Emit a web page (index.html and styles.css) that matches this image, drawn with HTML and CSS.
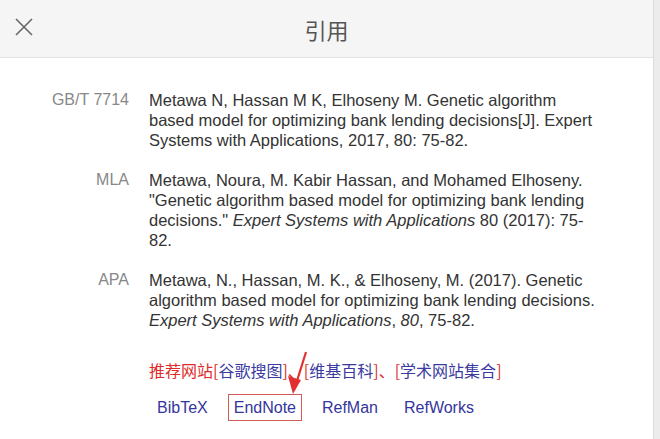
FILE: index.html
```html
<!DOCTYPE html>
<html lang="zh-CN">
<head>
    <meta charset="UTF-8">
    <meta name="viewport" content="width=device-width, initial-scale=1.0">
    <title>引用</title>
    <link rel="stylesheet" href="styles.css">
</head>
<body>
    <!-- Hộp thoại trích dẫn -->
    <div class="dialog">
        <div class="header">
            <span class="close">
                <svg width="20" height="20" viewBox="0 0 20 20">
                    <path d="M2 2 L18 18 M18 2 L2 18" stroke="#666" stroke-width="1.6" fill="none"/>
                </svg>
            </span>
            <span class="title">引用</span>
        </div>

        <div class="content">
            <div class="cite">
                <div class="label">GB/T 7714</div>
                <div class="text">Metawa N, Hassan M K, Elhoseny M. Genetic algorithm based model for optimizing bank lending decisions[J]. Expert Systems with Applications, 2017, 80: 75-82.</div>
            </div>
            <div class="cite">
                <div class="label">MLA</div>
                <div class="text">Metawa, Noura, M. Kabir Hassan, and Mohamed Elhoseny. "Genetic algorithm based model for optimizing bank lending decisions." <i>Expert Systems with Applications</i> 80 (2017): 75-82.</div>
            </div>
            <div class="cite">
                <div class="label">APA</div>
                <div class="text">Metawa, N., Hassan, M. K., &amp; Elhoseny, M. (2017). Genetic algorithm based model for optimizing bank lending decisions. <i>Expert Systems with Applications</i>, <i>80</i>, 75-82.</div>
            </div>

            <div class="sites">
                <span class="red">推荐网站[</span><span class="blue">谷歌搜图</span><span class="red">]、[</span><span class="blue">维基百科</span><span class="red">]、[</span><span class="blue">学术网站集合</span><span class="red">]</span>
            </div>

            <div class="links">
                <a href="#">BibTeX</a>
                <a href="#" class="marked">EndNote</a>
                <a href="#">RefMan</a>
                <a href="#">RefWorks</a>
            </div>
        </div>

        <!-- Mũi tên đánh dấu -->
        <svg class="arrow" width="40" height="50" viewBox="0 0 40 50">
            <path d="M26 2 L16 34" stroke="#e23030" stroke-width="2.2" fill="none"/>
            <polygon points="8,26 21,30 13,44" fill="#e23030"/>
        </svg>
    </div>
</body>
</html>
```

FILE: styles.css
```css
body {
    margin: 0;
    background: #ececec;
    font-family: "Liberation Sans", Arial, "Noto Sans CJK SC", sans-serif;
}

.dialog {
    width: 653px;
    height: 439px;
    background: #fff;
    border-right: 1px solid #dcdcdc;
    position: relative;
    overflow: hidden;
}

.header {
    height: 57px;
    background: #f5f5f5;
    border-bottom: 1px solid #e2e2e2;
    display: flex;
    align-items: center;
    justify-content: center;
    position: relative;
}

.close {
    position: absolute;
    left: 14px;
    top: 17px;
    width: 20px;
    height: 20px;
}

.title {
    font-family: "Noto Sans CJK SC", sans-serif;
    font-size: 22px;
    color: #555;
}

.content {
    padding: 32px 0 0 0;
    font-size: 16.5px;
    line-height: 20px;
}

.cite {
    display: flex;
    gap: 20px;
    margin-bottom: 20px;
}

.label {
    width: 129px;
    text-align: right;
    color: #888;
    flex: none;
    font-size: 16px;
}

.text {
    width: 448px;
    color: #333;
}

.sites {
    margin: 29px 0 0 149px;
    font-family: "Noto Sans CJK SC", sans-serif;
    font-size: 16px;
    line-height: 22px;
}

.red {
    color: #e02a2a;
}

.blue {
    color: #3a3aa0;
}

.links {
    display: flex;
    gap: 14px;
    margin: 13px 0 0 151px;
    font-size: 16px;
}

.links a {
    color: #35359c;
    text-decoration: none;
    padding: 4px 5px;
    line-height: 17px;
    border: 1px solid transparent;
}

.links a.marked {
    border-color: #d05a5a;
}

.arrow {
    position: absolute;
    left: 280px;
    top: 350px;
}
```
